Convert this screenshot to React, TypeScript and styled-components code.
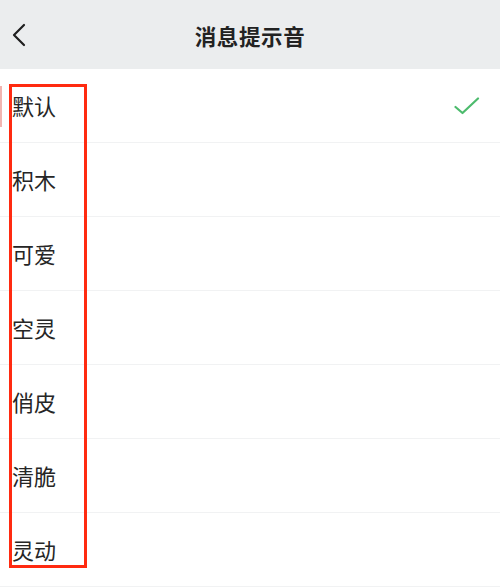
import React from "react";
import styled, { createGlobalStyle } from "styled-components";

const Global = createGlobalStyle`
  html, body { margin: 0; padding: 0; background: #ffffff; }
  body { font-family: "Noto Sans CJK SC", "Noto Sans", sans-serif; }
`;

const Page = styled.div`
  position: relative;
  width: 500px;
  height: 588px;
  overflow: hidden;
  background: #ffffff;
`;

const Header = styled.header`
  height: 69px;
  background: #ebedee;
  display: grid;
  grid-template-columns: 60px 1fr 60px;
  align-items: center;
`;

const BackButton = styled.div`
  display: flex;
  align-items: center;
  padding-left: 12px;
  height: 100%;
`;

const Title = styled.h1`
  margin: 0;
  text-align: center;
  font-size: 21.5px;
  font-weight: 700;
  color: #222222;
  letter-spacing: 0.6px;
  padding-top: 2px;
`;

const List = styled.ul`
  list-style: none;
  margin: 0;
  padding: 0;
`;

const Row = styled.li`
  height: 73px;
  display: flex;
  align-items: center;
  justify-content: space-between;
  padding: 0 20px 0 12px;
  border-bottom: 1px solid #f1f2f3;
  font-size: 22px;
  color: #262626;
`;

const Label = styled.span`
  line-height: 1;
  padding-bottom: 1px;
`;

const Highlight = styled.div`
  position: absolute;
  left: 9px;
  top: 84px;
  width: 72px;
  height: 478px;
  border: 3px solid #ff2a10;
  pointer-events: none;
`;

const EdgeMark = styled.div`
  position: absolute;
  left: 0;
  top: 86px;
  width: 2px;
  height: 41px;
  background: #f2b4b0;
`;

const items = ["默认", "积木", "可爱", "空灵", "俏皮", "清脆", "灵动"];

export default function App() {
  return (
    <>
      <Global />
      <Page>
        <Header>
          <BackButton>
            <svg width="14" height="24" viewBox="0 0 14 24">
              <path d="M12 2 L2 12 L12 22" fill="none" stroke="#1f1f1f" strokeWidth="2.2" strokeLinecap="round" strokeLinejoin="round" />
            </svg>
          </BackButton>
          <Title>消息提示音</Title>
          <div />
        </Header>
        <List>
          {items.map((t, i) => (
            <Row key={t}>
              <Label>{t}</Label>
              {i === 0 && (
                <svg width="26" height="18" viewBox="0 0 26 18">
                  <path d="M1.5 10 L8.5 16 L24 1.5" fill="none" stroke="#4dbb6d" strokeWidth="2.2" strokeLinecap="round" strokeLinejoin="round" />
                </svg>
              )}
            </Row>
          ))}
        </List>
        <EdgeMark />
        <Highlight />
      </Page>
    </>
  );
}
